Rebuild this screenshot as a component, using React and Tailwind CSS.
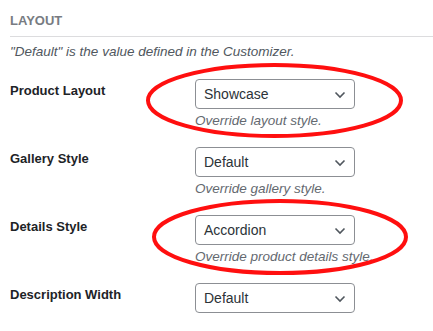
import React from "react";

function Chevron() {
  return (
    <svg width="12" height="8" viewBox="0 0 12 8" className="absolute right-[8px] top-[11px]">
      <polyline points="1.5,1.5 6,6 10.5,1.5" fill="none" stroke="#50575e" strokeWidth="1.6" />
    </svg>
  );
}

function Row({ label, value, desc }) {
  return (
    <div className="flex">
      <div className="w-[185px] shrink-0 text-[13px] leading-[20px] font-bold text-[#1d2327] pt-[2px]">{label}</div>
      <div className="flex flex-col">
        <div className="relative w-[160px] h-[30px] border border-[#8c8f94] rounded-[4px] bg-white pl-[8px] text-[14px] leading-[28px] text-[#2c3338]">
          {value}
          <Chevron />
        </div>
        {desc && (
          <div className="mt-[2px] text-[13.5px] leading-[20px] italic text-[#646970]">{desc}</div>
        )}
      </div>
    </div>
  );
}

export default function App() {
  return (
    <div
      className="relative w-[433px] h-[331px] overflow-hidden bg-white pl-[10px]"
      style={{ fontFamily: '"Liberation Sans", Arial, sans-serif' }}
    >
      <div className="pt-[13px] pb-[7px] border-b border-[#dcdcde] text-[13px] leading-[16px] font-bold text-[#787c82]">
        LAYOUT
      </div>
      <p className="mt-[5px] text-[13.5px] leading-[20px] italic text-[#50575e]">
        "Default" is the value defined in the Customizer.
      </p>
      <div className="mt-[17px] flex flex-col gap-[16px]">
        <Row label="Product Layout" value="Showcase" desc="Override layout style." />
        <Row label="Gallery Style" value="Default" desc="Override gallery style." />
        <Row label="Details Style" value="Accordion" desc="Override product details style." />
        <Row label="Description Width" value="Default" />
      </div>
      <svg className="absolute left-0 top-0 pointer-events-none" width="433" height="331" viewBox="0 0 433 331">
        <ellipse cx="274.5" cy="100.5" rx="126.5" ry="35.5" fill="none" stroke="#ff0f0f" strokeWidth="4" />
        <ellipse cx="280" cy="237" rx="126" ry="36" fill="none" stroke="#ff0f0f" strokeWidth="4" />
      </svg>
    </div>
  );
}
